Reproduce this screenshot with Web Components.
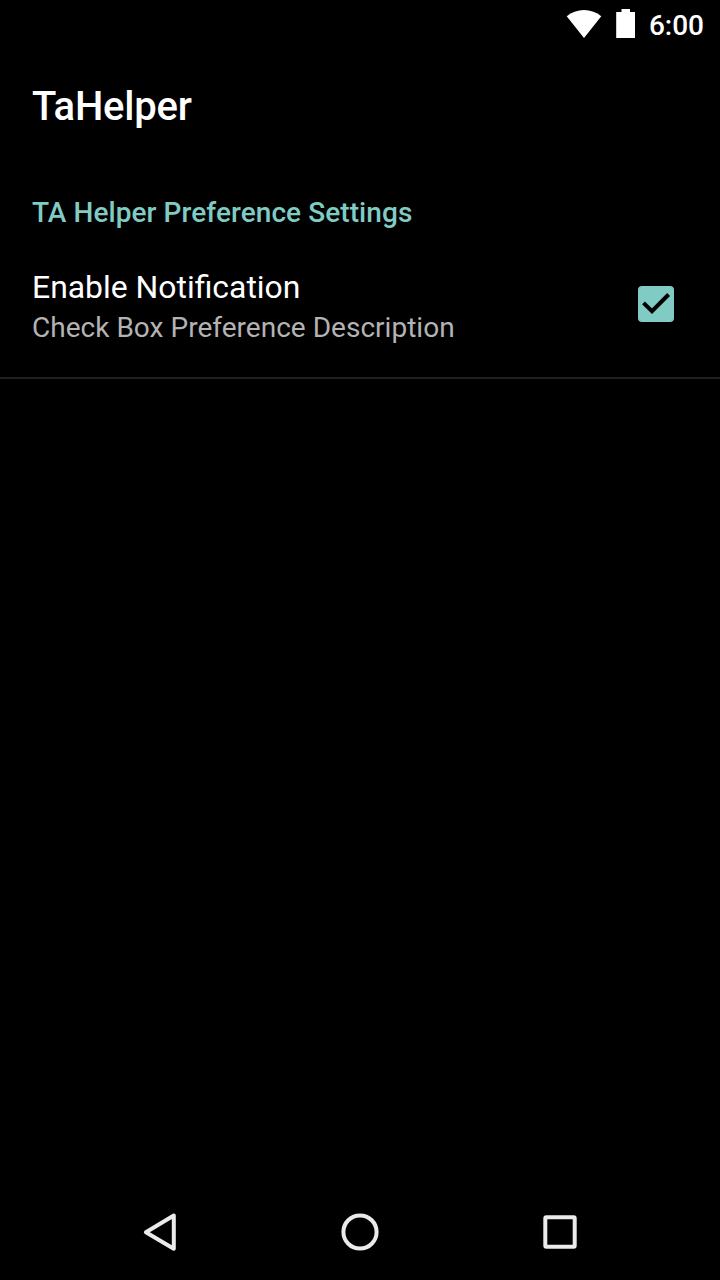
<!DOCTYPE html>
<html lang="en">
<head>
<meta charset="utf-8">
<title>TaHelper</title>
<style>
html, body { margin: 0; background: #000; }
body { font-family: Roboto, "Noto Sans", sans-serif; color: #fff; }
</style>
</head>
<body>
<settings-screen></settings-screen>
<script>
const define = (name, html) => {
  const template = document.createElement('template');
  template.innerHTML = html;
  customElements.define(name, class extends HTMLElement {
    constructor() {
      super();
      this.attachShadow({ mode: 'open' }).append(template.content.cloneNode(true));
    }
  });
};

define('status-bar', `
<style>
:host { display: flex; height: 48px; box-sizing: border-box; padding-right: 16px; justify-content: flex-end; align-items: flex-start; }
svg { display: block; fill: #fff; }
.wifi { margin-right: 14px; }
.battery { margin-right: 13px; }
span { font-size: 28px; font-weight: 500; line-height: 33px; margin-top: 9px; }
</style>
<svg class="wifi" width="36" height="48" viewBox="0 0 36 48"><path d="M.7 16.2C5.5 12.3 11.400 10 18 10s12.500 2.300 17.300 6.200L18 38z"/></svg>
<svg class="battery" width="20" height="48" viewBox="0 0 20 48"><path d="M.2 12H5.500V9h8.500v3h5v26H.2z"/></svg>
<span><slot></slot></span>`);

define('app-bar', `
<style>
:host { display: flex; height: 112px; box-sizing: border-box; padding: 6px 32px 0; align-items: center; }
h1 { margin: 0; font-size: 40px; font-weight: 500; line-height: 48px; letter-spacing: -0.2px; }
</style>
<h1><slot></slot></h1>`);

define('preference-category', `
<style>
:host { display: block; }
h2 { margin: 0; padding: 36px 32px 16px; font-size: 28px; font-weight: 500; line-height: 33px; letter-spacing: 0.07px; color: #80cbc4; }
</style>
<h2><slot name="title"></slot></h2>
<slot></slot>`);

define('check-box', `
<style>
:host { display: block; width: 36px; height: 36px; }
svg { display: block; }
</style>
<svg width="36" height="36" viewBox="0 0 36 36"><rect width="36" height="36" rx="4" fill="#80cbc4"/><path d="M5.500 16.800L14 25.200 30.600 8.500" fill="none" stroke="#000" stroke-width="4"/></svg>`);

define('checkbox-preference', `
<style>
:host { display: flex; height: 134px; box-sizing: border-box; padding: 23px 46px 0 32px; justify-content: space-between; align-items: flex-start; border-bottom: 2px solid #1f1f1f; }
.title { font-size: 31.900px; line-height: 38px; }
.summary { font-size: 28px; line-height: 33px; margin-top: 5px; letter-spacing: 0.02px; color: #b3b3b3; }
check-box { margin-top: 18px; }
</style>
<div>
  <div class="title"><slot></slot></div>
  <div class="summary"><slot name="summary"></slot></div>
</div>
<check-box></check-box>`);

define('navigation-bar', `
<style>
:host { display: flex; height: 96px; justify-content: center; gap: 140px; align-items: center; }
svg { display: block; fill: none; stroke: #ebebeb; stroke-width: 4; stroke-linejoin: round; }
</style>
<svg width="60" height="60" viewBox="0 0 60 60"><path d="M15.900 30.200L43.800 13.500V46.700z"/></svg>
<svg width="60" height="60" viewBox="0 0 60 60"><circle cx="30" cy="30" r="16.600"/></svg>
<svg width="60" height="60" viewBox="0 0 60 60"><rect x="15.300" y="15.300" width="29.400" height="29.400" rx="1"/></svg>`);

define('settings-screen', `
<style>
:host { display: flex; flex-direction: column; width: 720px; height: 1280px; background: #000; overflow: hidden; }
main { flex: 1; }
</style>
<status-bar>6:00</status-bar>
<app-bar>TaHelper</app-bar>
<main>
  <preference-category>
    <span slot="title">TA Helper Preference Settings</span>
    <checkbox-preference>Enable Notification<span slot="summary">Check Box Preference Description</span></checkbox-preference>
  </preference-category>
</main>
<navigation-bar></navigation-bar>`);
</script>
</body>
</html>
